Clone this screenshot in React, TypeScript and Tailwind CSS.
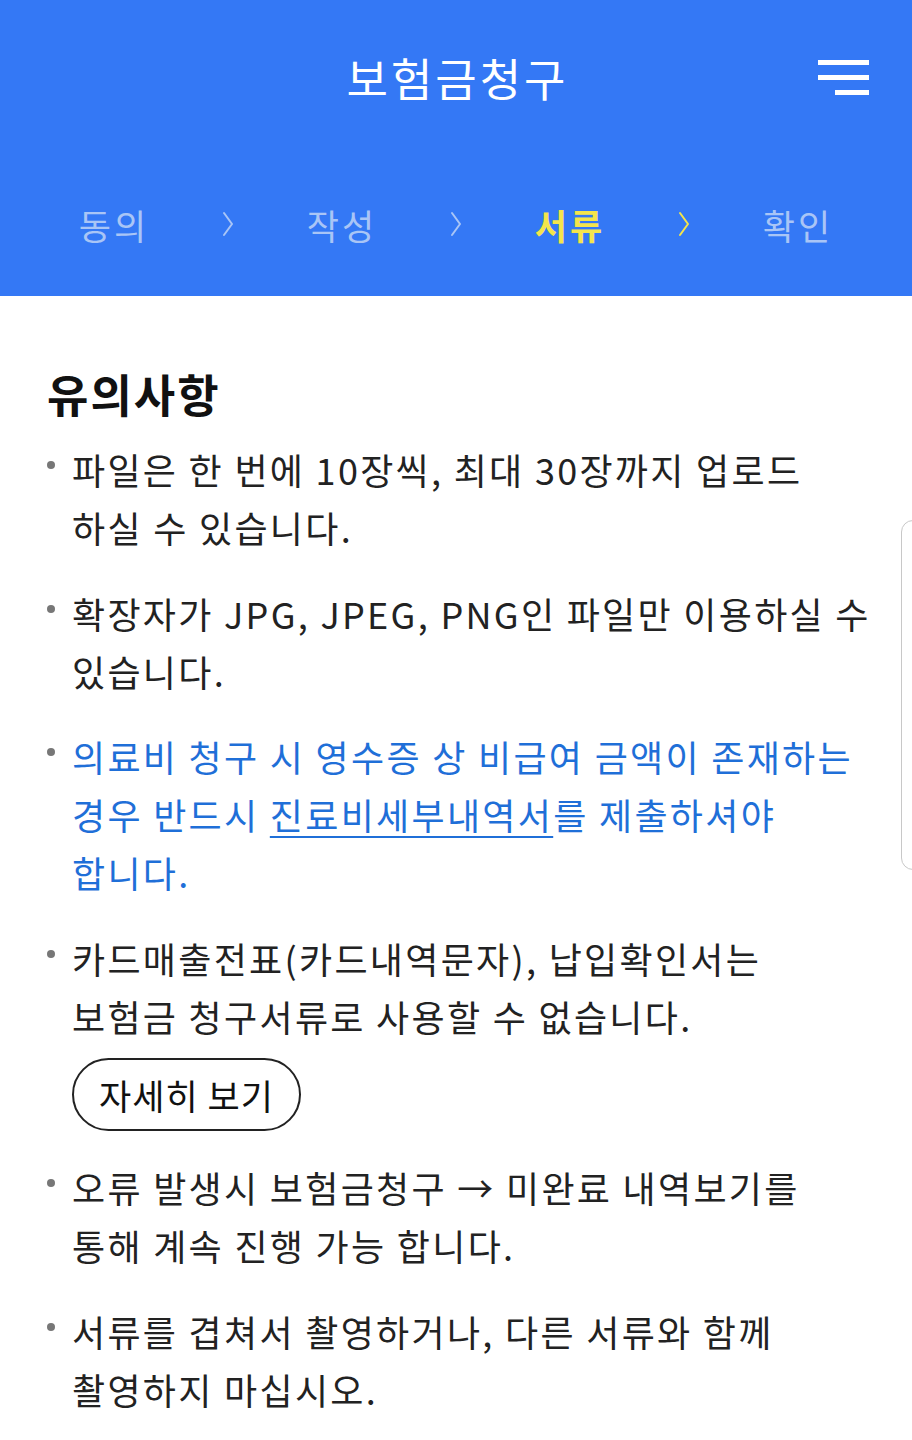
import React from 'react';

const steps = [
  { label: '동의', state: 'done' },
  { label: '작성', state: 'done' },
  { label: '서류', state: 'current' },
  { label: '확인', state: 'todo' },
];

function Chevron({ active }: { active: boolean }) {
  return (
    <svg width="12" height="26" viewBox="0 0 12 26" fill="none" aria-hidden="true">
      <path
        d="M2 2 L10 13 L2 24"
        stroke={active ? '#f4e54c' : '#a9c5f6'}
        strokeWidth="2"
        strokeLinecap="round"
        strokeLinejoin="round"
      />
    </svg>
  );
}

function Bullet({ children }: { children: React.ReactNode }) {
  return (
    <li className="relative pl-[25px]">
      <span className="absolute left-0 top-[21px] w-[8px] h-[8px] rounded-full bg-[#777777]" aria-hidden="true" />
      {children}
    </li>
  );
}

export default function App() {
  return (
    <div
      className="relative min-h-[1440px] w-[912px] bg-white overflow-hidden"
      style={{ fontFamily: '"Noto Sans CJK KR", "Noto Sans", sans-serif' }}
    >
      {/* Header */}
      <header className="bg-[#3478f5] h-[296px] flex flex-col">
        <div className="relative h-[156px] flex items-center justify-center">
          <h1 className="text-[45px] leading-none tracking-[3px] text-white font-normal -mt-[2px] pl-[3px]">보험금청구</h1>
          <button className="absolute left-[817px] top-[60px] w-[52px] h-[36px] flex flex-col items-end gap-[10px]" aria-label="메뉴">
            <span className="block w-[51px] h-[5px] bg-white" />
            <span className="block w-[51px] h-[5px] bg-white" />
            <span className="block w-[34px] h-[5px] bg-white" />
          </button>
        </div>

        {/* Steps */}
        <nav className="grid grid-cols-7 px-[57px] h-[136px] items-center">
          {steps.map((step, i) => (
            <React.Fragment key={step.label}>
              <div
                className={
                  step.state === 'current'
                    ? 'text-center text-[35px] leading-none tracking-[3px] font-bold text-[#f4e54c]'
                    : 'text-center text-[35px] leading-none tracking-[3px] font-normal text-[#a9c5f6]'
                }
              >
                {step.label}
              </div>
              {i < steps.length - 1 && (
                <div className="flex justify-center">
                  <Chevron active={step.state === 'current'} />
                </div>
              )}
            </React.Fragment>
          ))}
        </nav>
      </header>

      {/* Notice */}
      <main className="pl-[47px] pr-[16px] pt-[70px]">
        <h2 className="text-[45px] leading-[56px] tracking-[2px] font-bold text-[#111111] mb-[18px]">유의사항</h2>

        <ul className="flex flex-col gap-[27.5px] text-[36px] leading-[58px] tracking-[2.3px] text-[#222222] break-keep">
          <Bullet>
            파일은 한 번에 10장씩, 최대 30장까지 업로드
            <br />
            하실 수 있습니다.
          </Bullet>
          <Bullet>
            확장자가 JPG, JPEG, PNG인 파일만 이용하실 수
            <br />
            있습니다.
          </Bullet>
          <Bullet>
            <span className="text-[#1f6fd8]">
              의료비 청구 시 영수증 상 비급여 금액이 존재하는
              <br />
              경우 반드시 <span className="underline underline-offset-[6px] decoration-2">진료비세부내역서</span>를 제출하셔야
              <br />
              합니다.
            </span>
          </Bullet>
          <Bullet>
            카드매출전표(카드내역문자), 납입확인서는
            <br />
            보험금 청구서류로 사용할 수 없습니다.
            <div className="mt-[13px]">
              <button className="h-[73px] w-[229px] rounded-full border-2 border-[#222222] text-[35px] leading-none tracking-[1px] text-[#111111] flex items-center justify-center">
                자세히 보기
              </button>
            </div>
          </Bullet>
          <Bullet>
            오류 발생시 보험금청구 → 미완료 내역보기를
            <br />
            통해 계속 진행 가능 합니다.
          </Bullet>
          <Bullet>
            서류를 겹쳐서 촬영하거나, 다른 서류와 함께
            <br />
            촬영하지 마십시오.
          </Bullet>
        </ul>
      </main>

      {/* Edge panel handle */}
      <div className="absolute left-[901px] top-[520px] w-[30px] h-[350px] rounded-[12px] border-[1.5px] border-[#c8c8c8] bg-white" aria-hidden="true" />
    </div>
  );
}
